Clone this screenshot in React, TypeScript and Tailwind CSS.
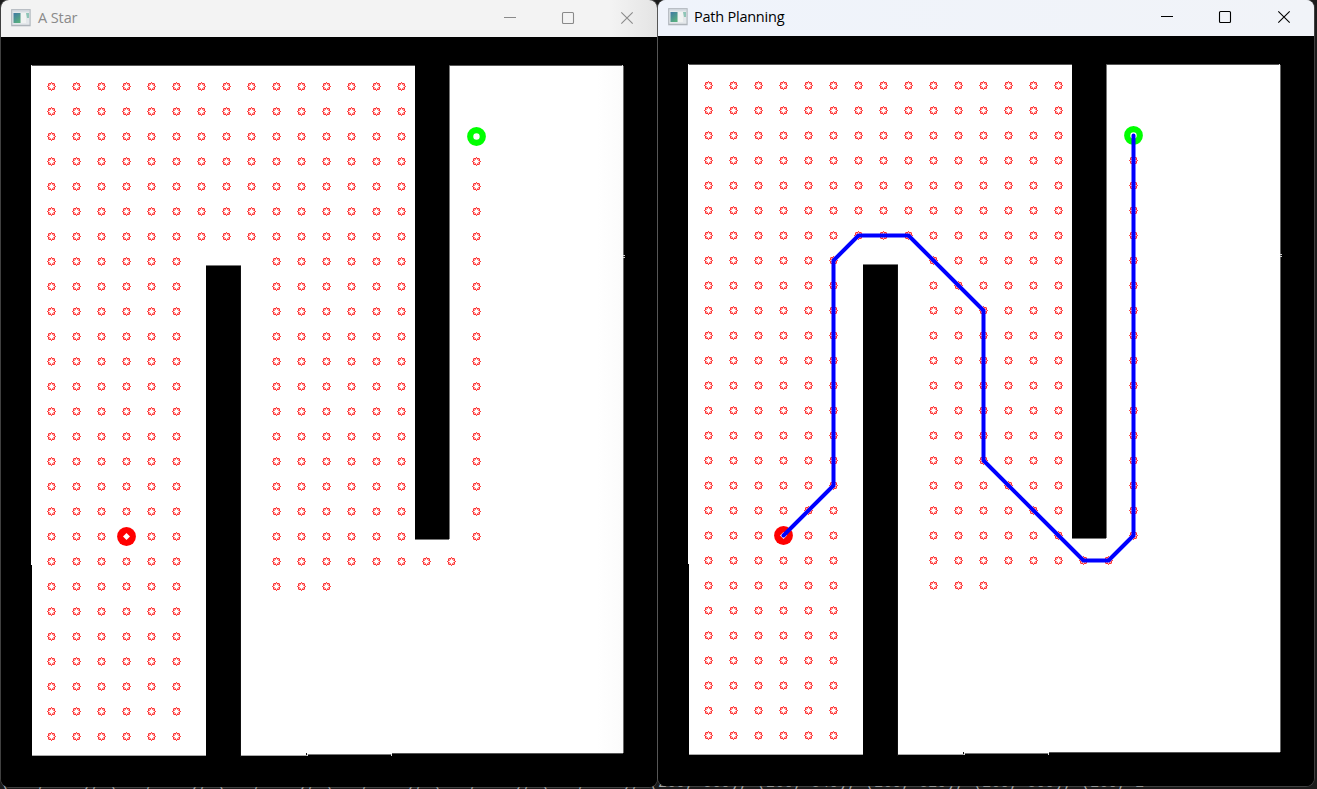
const STEP = 25;
const at = (n: number) => 50.5 + n * STEP;

function visited(): [number, number][] {
  const cells: [number, number][] = [];
  for (let r = 0; r <= 26; r++) {
    for (let c = 0; c <= 17; c++) {
      const left = c <= 5;
      const gap = c >= 6 && c <= 8 && r <= 6;
      const middle = c >= 9 && c <= 14 && r <= 19;
      const tail = (c >= 9 && c <= 11 && r === 20) || ((c === 15 || c === 16) && r === 19);
      const right = c === 17 && r >= 3 && r <= 18;
      if (left || gap || middle || tail || right) cells.push([c, r]);
    }
  }
  return cells;
}

const cells = visited();
const route: [number, number][] = [
  [3, 18], [5, 16], [5, 7], [6, 6], [8, 6], [11, 9], [11, 15], [15, 19], [16, 19], [17, 18], [17, 2],
];

function Dot({ x, y }: { x: number; y: number }) {
  return (
    <g transform={`translate(${x - 0.5} ${y - 0.5})`} shapeRendering="crispEdges">
      <path d="M-2 -3h2v1h-2zM1 -3h2v1h-2zM-2 3h2v1h-2zM1 3h2v1h-2zM-3 -2h1v2h-1zM3 -2h1v2h-1zM-3 1h1v2h-1zM3 1h1v2h-1z" fill="#ff3030" />
      <path d="M-1 -2h1v1h-1zM1 -2h1v1h-1zM-1 2h1v1h-1zM1 2h1v1h-1zM-2 -1h1v1h-1zM2 -1h1v1h-1zM-2 1h1v1h-1zM2 1h1v1h-1z" fill="#ff8080" />
      <path d="M0 -4h1v1h-1zM0 4h1v1h-1zM-4 0h1v1h-1zM4 0h1v1h-1z" fill="#ff4040" />
      <path d="M0 -3h1v1h-1zM0 3h1v1h-1zM-3 0h1v1h-1zM3 0h1v1h-1zM-2 -2h1v1h-1zM2 -2h1v1h-1zM-2 2h1v1h-1zM2 2h1v1h-1z" fill="#ffb8b8" />
      <path d="M-3 -3h1v1h-1zM3 -3h1v1h-1zM-3 3h1v1h-1zM3 3h1v1h-1z" fill="#ff9090" />
    </g>
  );
}

function MapCanvas({ path, shade }: { path: boolean; shade: boolean }) {
  return (
    <svg width="656" height="750" viewBox="0 0 656 750" className="block shrink-0 bg-black">
      <defs>
        <linearGradient id="edge">
          <stop offset="0" stopColor="#fff" />
          <stop offset="1" stopColor="#fbfbfb" />
        </linearGradient>
      </defs>
      <g shapeRendering="crispEdges">
        <path d="M30 29H622V716H391V717H306V718H31V528H30Z" fill="#fff" />
        {shade && <rect x="596" y="29" width="26" height="687" fill="url(#edge)" />}
        <path d="M30 28.5H622" stroke="#555" />
        <path d="M622.5 29V716" stroke="#666" />
        <path d="M31 718.5H306" stroke="#aaa" />
        <path d="M306 717.5H391" stroke="#777" />
        <path d="M391 716.5H622" stroke="#555" />
        <path d="M622 218.5h2M622 220.5h2" stroke="#ccc" />
        <path d="M305 716h1v2h-1z" fill="#111" />
        <path d="M306 717h1v2h-1zM390 717h1v2h-1zM30 28h1v1h-1zM621 28h1v1h-1z" fill="#ddd" />
        <path d="M205 229h34v491h-34zM414 28h34v474h-34z" fill="#000" />
        <path d="M239.5 229v491" stroke="#111" />
        <path d="M205 228.5h35M414 502.5h34M448.5 29v473" stroke="#777" />
      </g>
      {cells.map(([c, r]) => (
        <Dot key={`${c}-${r}`} x={at(c)} y={at(r) - 1} />
      ))}
      <circle cx={at(3)} cy={at(18) - 1} r="9.4" fill="#f00" />
      <path d={`M${at(3) - 3.5} ${at(18) - 1}l3.5 -3.5l3.5 3.5l-3.5 3.5z`} fill="#fff" />
      <circle cx={at(17)} cy={at(2) - 1} r="6.3" fill="#fff" stroke="#0f0" strokeWidth="6.2" />
      {path && (
        <polyline
          points={route.map(([c, r]) => `${at(c)},${at(r) - 1}`).join(" ")}
          fill="none"
          stroke="#00f"
          strokeWidth="4"
          strokeLinecap="round"
          strokeLinejoin="round"
        />
      )}
    </svg>
  );
}

function AppIcon() {
  return (
    <svg width="20" height="18" viewBox="0 0 20 18" className="shrink-0">
      <defs>
        <linearGradient id="picture" x1="0" y1="0" x2="0.6" y2="1">
          <stop offset="0" stopColor="#3f78a4" />
          <stop offset="1" stopColor="#58ae80" />
        </linearGradient>
      </defs>
      <rect x="0.7" y="0.7" width="18.4" height="16" fill="#e4e8eb" stroke="#b3b9bf" strokeWidth="1.2" />
      <path d="M1.5 2h17" stroke="#cbd2dc" />
      <rect x="2.5" y="4" width="7" height="10" fill="url(#picture)" />
      <path d="M10 4h5v10h-5z" fill="#f1f3f2" />
      <path d="M15 4h3v5h-2z" fill="#8fc5b7" />
      <path d="M1 16.4h18" stroke="#aeb4ba" strokeWidth="1.3" />
    </svg>
  );
}

function Controls() {
  return (
    <svg width="132" height="14" viewBox="0 0 132 14" fill="none" stroke="currentColor" className="shrink-0">
      <path d="M0 6.5h12" />
      <rect x="58.5" y="1.5" width="11" height="11" rx="1" strokeWidth="1.1" />
      <path d="M117.3 1.3l11.4 11.4M128.7 1.3l-11.4 11.4" strokeWidth="1.1" />
    </svg>
  );
}

function Window({ title, active }: { title: string; active: boolean }) {
  return (
    <section
      className={`flex w-[656px] shrink-0 flex-col overflow-hidden rounded-lg bg-black shadow-[0_0_0_1px_rgba(120,120,120,0.4)] ${active ? "h-[786px]" : "h-[787px]"}`}
    >
      <header
        className={`flex shrink-0 items-center ${
          active
            ? "h-9 bg-[#eff3fb] bg-[linear-gradient(to_right,#eff3fb,#f1f3f8)] pb-[3px] pl-[10px] pr-[21px] text-black"
            : "h-[37px] bg-[linear-gradient(to_right,#f3f3f3_93%,#e4e4e4)] pb-[2px] pl-[10px] pr-[21px] text-[#8a8a8a]"
        }`}
      >
        <AppIcon />
        <h1
          className={`flex-1 whitespace-nowrap font-['Open_Sans',sans-serif] text-[14.5px] leading-5 ${
            active ? "ml-[6px] tracking-[-0.23px]" : "ml-[7px] tracking-[-0.1px]"
          }`}
        >
          {title}
        </h1>
        <Controls />
      </header>
      <MapCanvas path={active} shade={!active} />
    </section>
  );
}

export default function App() {
  return (
    <main className="relative h-[789px] w-[1317px] overflow-hidden bg-[#1b1b1b] pl-px">
      <pre className="absolute left-[1px] top-[776px] font-['Liberation_Mono',monospace] text-[15px] leading-4 text-[#aaa]">
        {"(200, 440), (200, 440), (200, 440), (220, 420), (240, 460), (260, 580), (260, 560), (260, 540), (260, 520), (260, 500), (260, 2"}
      </pre>
      <div className="relative flex items-start gap-px">
        <Window title="A Star" active={false} />
        <Window title="Path Planning" active />
      </div>
    </main>
  );
}
